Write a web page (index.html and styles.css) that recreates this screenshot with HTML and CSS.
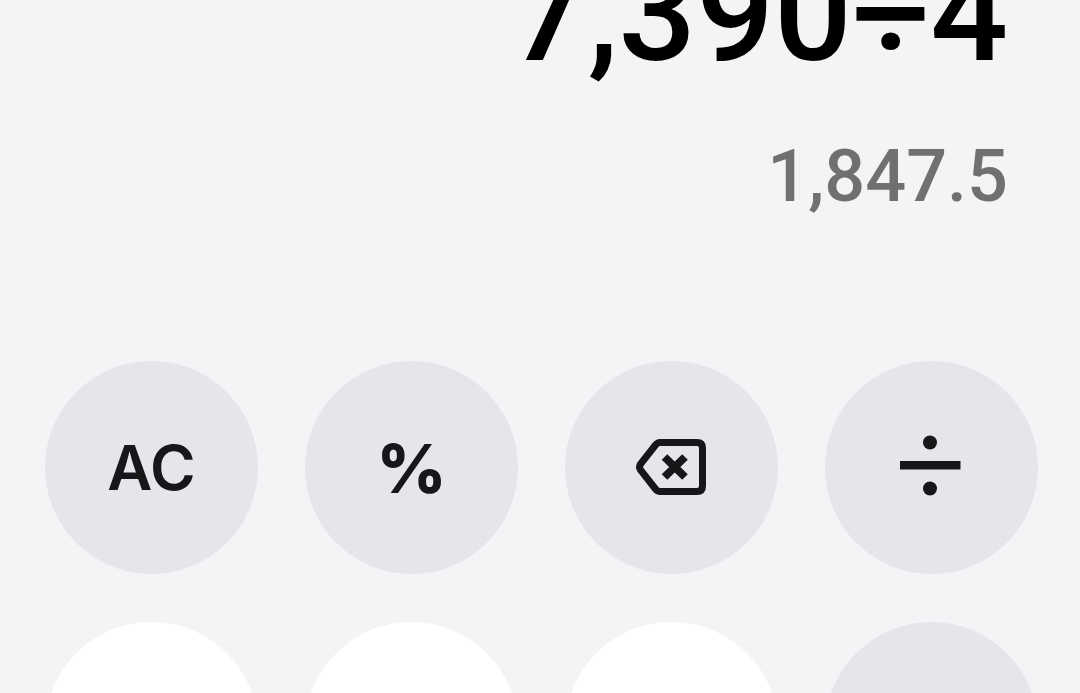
FILE: index.html
```html
<!DOCTYPE html>
<html lang="en">
<head>
<meta charset="utf-8">
<meta name="viewport" content="width=device-width, initial-scale=1">
<title>Calculator</title>
<link rel="stylesheet" href="styles.css">
</head>
<body>
<main class="calculator">
  <section class="display" aria-label="Display">
    <div class="expression">7,390÷4</div>
    <output class="result">1,847.5</output>
  </section>
  <section class="keypad" aria-label="Keypad">
    <button class="key key-function" type="button">AC</button>
    <button class="key key-function key-percent" type="button">%</button>
    <button class="key key-function" type="button" aria-label="Delete">
      <svg class="icon" viewBox="0 0 80 80" aria-hidden="true">
        <path d="M28 14.500H65Q70.500 14.500 70.500 20V58Q70.500 63.500 65 63.500H28Q25.500 63.500 23.500 61L8.500 42Q6.500 39 8.500 36L23.500 17Q25.500 14.500 28 14.500Z" fill="none" stroke="#161718" stroke-width="7"/>
        <path d="M32.500 29L53 49M53 29L32.500 49" fill="none" stroke="#161718" stroke-width="8"/>
      </svg>
    </button>
    <button class="key key-function" type="button" aria-label="Divide">
      <svg class="icon" viewBox="0 0 80 80" aria-hidden="true">
        <circle cx="38" cy="14.500" r="7" fill="#161718"/>
        <path d="M8 33H68.500V41.500H8Z" fill="#161718"/>
        <circle cx="38" cy="60.500" r="7" fill="#161718"/>
      </svg>
    </button>
    <button class="key key-digit" type="button" aria-label="7"></button>
    <button class="key key-digit" type="button" aria-label="8"></button>
    <button class="key key-digit" type="button" aria-label="9"></button>
    <button class="key key-function" type="button" aria-label="Multiply"></button>
  </section>
</main>
</body>
</html>
```
FILE: styles.css
```css
* {
  box-sizing: border-box;
}

body {
  margin: 0;
  background: #f3f4f6;
  font-family: Roboto, "Liberation Sans", sans-serif;
  color: #000;
}

.calculator {
  height: 100vh;
  overflow: hidden;
}

/* The display is scrolled up, so the top of the expression is cut off. */
.display {
  display: flex;
  flex-direction: column;
  align-items: flex-end;
  gap: 58px;
  margin-top: -57px;
  padding: 0 72px 148px 0;
  font-weight: 500;
}

.expression {
  font-size: 137px;
  line-height: 140px;
}

.result {
  font-size: 72px;
  line-height: 72px;
  color: #707070;
}

.keypad {
  display: grid;
  grid-template-columns: repeat(4, 1fr);
  gap: 48px 47px;
  padding: 0 42px 48px 45px;
}

.key {
  display: flex;
  align-items: center;
  justify-content: center;
  width: 100%;
  aspect-ratio: 1;
  padding: 0;
  border: 0;
  border-radius: 50%;
  font-family: Inter, "Liberation Sans", sans-serif;
  font-size: 62px;
  font-weight: 600;
  line-height: 74px;
  color: #161718;
}

.key-function {
  background: #e5e6ea;
}

.key-digit {
  background: #fff;
}

.key-percent {
  font-size: 68px;
  font-weight: 800;
}

.icon {
  width: 80px;
  height: 80px;
}
```
